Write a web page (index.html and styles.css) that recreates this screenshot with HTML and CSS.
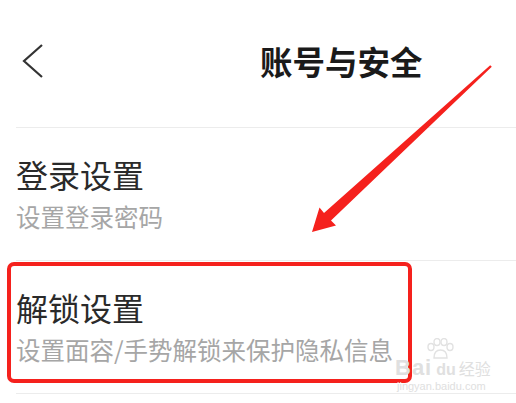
FILE: index.html
```html
<!DOCTYPE html>
<html lang="zh">
<head>
<meta charset="utf-8">
<link rel="stylesheet" href="styles.css">
</head>
<body>
<div class="page">
  <header class="nav">
    <svg class="back" width="22" height="34" viewBox="0 0 22 34"><polyline points="20,1 2,17 20,33" fill="none" stroke="#333" stroke-width="2.2"/></svg>
    <h1 class="title">账号与安全</h1>
  </header>
  <ul class="list">
    <li class="item">
      <div class="item-title">登录设置</div>
      <div class="item-sub">设置登录密码</div>
    </li>
    <li class="item">
      <div class="item-title">解锁设置</div>
      <div class="item-sub">设置面容/手势解锁来保护隐私信息</div>
    </li>
  </ul>
  <div class="highlight"></div>
  <svg class="arrow" width="516" height="403" viewBox="0 0 516 403">
    <polygon points="490.2,65.2 491.8,66.8 331,220.5 336,225.5 312,232 319.5,207.5 324,213" fill="#f5211d"/>
  </svg>
  <div class="watermark">
    <svg class="paw" width="30" height="22" viewBox="0 0 30 22" fill="none" stroke="#e2e2e2" stroke-width="1.4">
      <ellipse cx="6" cy="9" rx="3" ry="3.5"/>
      <ellipse cx="12" cy="4" rx="3" ry="3.5"/>
      <ellipse cx="19" cy="4" rx="3" ry="3.5"/>
      <ellipse cx="25" cy="9" rx="3" ry="3.5"/>
      <path d="M9 20 C9 14 12 12 15.5 12 C19 12 22 14 22 20 Z"/>
    </svg>
    <div class="wm-main"><span class="wm-bai">Bai</span><span class="wm-du">du</span><span class="wm-jy">经验</span></div>
    <div class="wm-url">jingyan.baidu.com</div>
  </div>
</div>
</body>
</html>
```

FILE: styles.css
```css
html, body {
  margin: 0;
  padding: 0;
  background: #fff;
}
body {
  font-family: "Noto Sans CJK SC", "Noto Sans", sans-serif;
  width: 516px;
  height: 403px;
  overflow: hidden;
}
.page {
  position: relative;
  width: 516px;
  height: 403px;
}
.nav {
  height: 127px;
  display: flex;
  align-items: flex-start;
  padding: 45px 0 0 22px;
  box-sizing: border-box;
}
.back {
  display: block;
  margin-top: -1px;
}
.title {
  margin: 0 0 0 216px;
  font-size: 32.5px;
  line-height: 32px;
  font-weight: 700;
  color: #1a1a1a;
}
.list {
  list-style: none;
  margin: 0 0 0 16px;
  padding: 0;
  border-top: 1px solid #ececec;
}
.item {
  padding: 30px 0 31px;
  border-bottom: 1px solid #ececec;
}
.item-title {
  font-size: 32px;
  line-height: 32px;
  color: #2a2a2a;
}
.item-sub {
  margin-top: 15px;
  font-size: 24.5px;
  line-height: 24px;
  color: #a6a6a6;
}
.highlight {
  position: absolute;
  left: 7px;
  top: 262px;
  width: 405px;
  height: 121px;
  box-sizing: border-box;
  border: 4px solid #f5211d;
  border-radius: 7px;
}
.arrow {
  position: absolute;
  left: 0;
  top: 0;
}
.watermark {
  position: absolute;
  left: 395px;
  top: 338px;
  width: 100px;
  color: #e0e0e0;
  font-family: "Liberation Sans", sans-serif;
}
.paw {
  position: absolute;
  left: 30px;
  top: 0;
}
.wm-main {
  position: absolute;
  top: 18px;
  left: 0;
  display: flex;
  align-items: baseline;
  white-space: nowrap;
}
.wm-bai {
  font-size: 22px;
  font-weight: 700;
  line-height: 24px;
  letter-spacing: 1px;
}
.wm-du {
  font-size: 16px;
  font-weight: 700;
  margin-left: 4px;
  line-height: 24px;
}
.wm-jy {
  font-family: "Noto Sans CJK SC", sans-serif;
  font-size: 16px;
  margin-left: 3px;
  line-height: 24px;
}
.wm-url {
  position: absolute;
  top: 42px;
  left: 2px;
  font-size: 11px;
  line-height: 12px;
  white-space: nowrap;
}
```
